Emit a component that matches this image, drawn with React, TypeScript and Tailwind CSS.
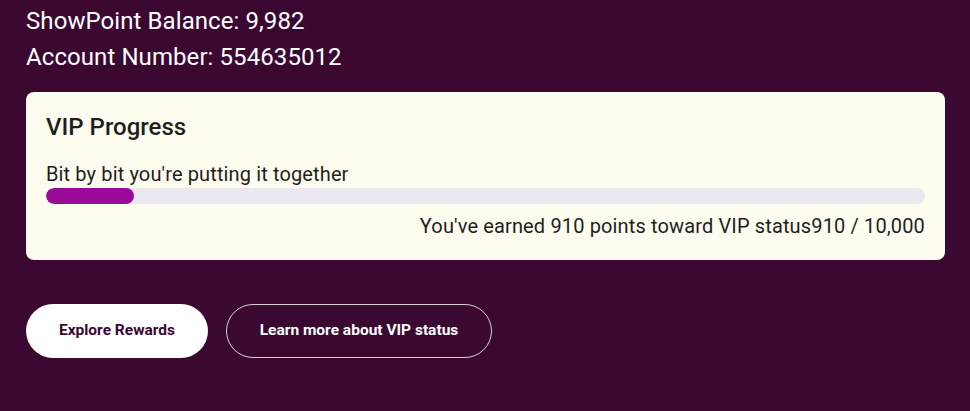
export default function App() {
  const earned = 910;
  const goal = 10000;
  const pct = Math.max((earned / goal) * 100, 10);

  return (
    <div className="min-h-screen w-full bg-[#3b0832] font-['Roboto',sans-serif] px-[26px] pt-[3px]">
      {/* Account info */}
      <div className="text-white text-[24px] leading-[36px] tracking-[0.08px]">
        <p>ShowPoint Balance: 9,982</p>
        <p>Account Number: 554635012</p>
      </div>

      {/* VIP card */}
      <div className="mt-[17px] w-[919px] rounded-lg bg-[#fefcef] px-5 pt-[21px] pb-[22px] text-[#1e1e1e]">
        <h2 className="text-[24px] font-medium leading-7">VIP Progress</h2>
        <p className="mt-[21px] text-[20px] leading-6 tracking-[0.13px]">Bit by bit you're putting it together</p>
        <div className="mt-[2px] h-4 w-full rounded-full bg-[#ebe8ef] overflow-hidden">
          <div className="h-full rounded-full bg-[#990a99]" style={{ width: `${pct}%` }} />
        </div>
        <p className="mt-[10px] text-right text-[20px] leading-6 tracking-[0.14px]">
          You've earned {earned} points toward VIP status{earned} / {goal.toLocaleString("en-US")}
        </p>
      </div>

      {/* Actions */}
      <div className="mt-[44px] flex gap-[18px]">
        <button className="h-[54px] w-[182px] rounded-full bg-white text-[15.5px] font-bold text-[#3b0832]">
          Explore Rewards
        </button>
        <button className="h-[54px] w-[266px] rounded-full border border-white/80 text-[15.5px] font-bold text-white">
          Learn more about VIP status
        </button>
      </div>
    </div>
  );
}
